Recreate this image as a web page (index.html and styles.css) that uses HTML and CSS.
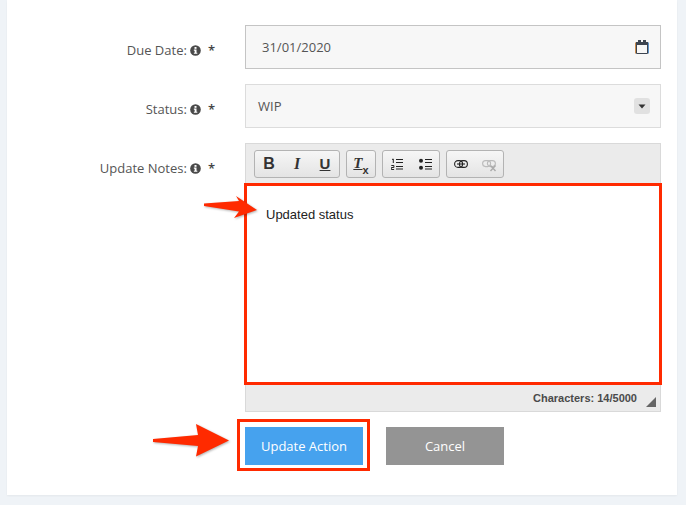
FILE: index.html
```html
<!DOCTYPE html>
<html lang="en">
<head>
<meta charset="utf-8">
<title>Update Action</title>
<link rel="stylesheet" href="styles.css">
</head>
<body>
<main class="card">
  <form class="form">
    <div class="row">
      <label class="label">Due Date:
        <svg class="info" viewBox="0 0 12 12"><use href="#i-info"/></svg><span class="req">*</span></label>
      <div class="field field-date">
        <span class="value">31/01/2020</span>
        <svg class="cal" viewBox="0 0 14 14" width="14" height="14">
          <path d="M0.5 2.5V13.5" stroke="#c98a4b" stroke-width="1"/>
          <path d="M13.5 2.5V13.5" stroke="#5f93c9" stroke-width="1"/>
          <path d="M1.5 3V13.5H12.5V3" fill="none" stroke="#3c4450" stroke-width="1"/>
          <rect x="1" y="2" width="12" height="3" fill="#3c4450"/>
          <rect x="3" y="0" width="3" height="3" fill="#3c4450"/>
          <rect x="8" y="0" width="3" height="3" fill="#3c4450"/>
        </svg>
      </div>
    </div>
    <div class="row">
      <label class="label">Status:
        <svg class="info" viewBox="0 0 12 12"><use href="#i-info"/></svg><span class="req">*</span></label>
      <div class="field field-status">
        <span class="value">WIP</span>
        <span class="caret"><svg viewBox="0 0 8 5" width="8" height="5"><path d="M0.5 0.5h7L4 4.6z" fill="#333"/></svg></span>
      </div>
    </div>
    <div class="row">
      <label class="label">Update Notes:
        <svg class="info" viewBox="0 0 12 12"><use href="#i-info"/></svg><span class="req">*</span></label>
      <div class="editor">
        <div class="toolbar">
          <div class="group g-basic">
            <span class="tool t-b">B</span><span class="tool t-i">I</span><span class="tool t-u">U</span>
          </div>
          <div class="group g-clear">
            <span class="t-t">T</span><span class="t-x">x</span>
          </div>
          <div class="group g-list">
            <svg viewBox="0 0 12 12" width="12" height="12">
              <path d="M1 1.5L2.3 1V5" fill="none" stroke="#222" stroke-width="1"/>
              <path d="M0.3 7.5h2.6v2H0.3v2h2.8" fill="none" stroke="#222" stroke-width="1"/>
              <path d="M5 1.5h7M5 4.5h7M5 8.5h7M5 11h7" stroke="#222" stroke-width="1"/>
            </svg>
            <svg viewBox="0 0 13 12" width="13" height="12">
              <circle cx="2" cy="2.8" r="2" fill="#222"/><circle cx="2" cy="9.8" r="2" fill="#222"/>
              <path d="M6 1.5h7M6 4.5h7M6 8.5h7M6 11h7" stroke="#222" stroke-width="1"/>
            </svg>
          </div>
          <div class="group g-link">
            <svg viewBox="0 0 14 8" width="14" height="8">
              <rect x="0.6" y="0.6" width="8" height="6.8" rx="3.4" fill="none" stroke="#222" stroke-width="1.1"/>
              <rect x="5.4" y="0.6" width="8" height="6.8" rx="3.4" fill="none" stroke="#222" stroke-width="1.1"/>
              <path d="M3 4h8" stroke="#222" stroke-width="1.1"/>
            </svg>
            <svg viewBox="0 0 15 12" width="15" height="12">
              <rect x="0.6" y="0.6" width="8" height="6" rx="3" fill="none" stroke="#bbb" stroke-width="1.1"/>
              <rect x="5.4" y="0.6" width="8" height="6" rx="3" fill="none" stroke="#bbb" stroke-width="1.1"/>
              <path d="M8.5 5.5l5 5.5M13.5 5.5l-5 5.5" stroke="#aaa" stroke-width="1.4"/>
            </svg>
          </div>
        </div>
        <div class="notes">Updated status</div>
        <div class="statusbar">
          <span class="count">Characters: 14/5000</span>
          <svg class="grip" viewBox="0 0 10 10" width="10" height="10"><path d="M10 0v10H0z" fill="#666"/></svg>
        </div>
      </div>
    </div>
    <div class="actions">
      <button type="button" class="btn btn-primary">Update Action</button>
      <button type="button" class="btn btn-cancel">Cancel</button>
    </div>
  </form>
</main>
<svg class="arrow arrow-notes" viewBox="0 0 53 22" width="53" height="22">
  <path d="M0 7.5L35 5L32 0L53 14L30 22L35 15.5L0 10Z" fill="#ff2a00"/>
</svg>
<svg class="arrow arrow-btn" viewBox="0 0 76 33" width="76" height="33">
  <path d="M0 15L45 11L43 0L76 16.5L43 32.5L45 22L0 18Z" fill="#ff2a00"/>
</svg>
<svg class="defs" width="0" height="0">
  <defs>
    <g id="i-info">
      <circle cx="6" cy="6" r="5.8" fill="#4a4a4a"/>
      <rect x="4.9" y="2.2" width="2.2" height="2" fill="#fff"/>
      <path d="M4.2 5h2.9v3.4h.9v1.2H4.2V8.4h.9V6.2h-.9z" fill="#fff"/>
    </g>
  </defs>
</svg>
</body>
</html>
```
FILE: styles.css
```css
* { box-sizing: border-box; }
html, body { margin: 0; padding: 0; }
body {
  position: relative;
  width: 686px;
  height: 505px;
  overflow: hidden;
  background: #eff3f7;
  font-family: "Open Sans", sans-serif;
  font-size: 13px;
  color: #555;
}
.card {
  margin: 0 9px 0 7px;
  height: 495px;
  background: #fff;
  box-shadow: 0 1px 2px rgba(0,0,0,0.05);
  padding: 25px 0 0 238px;
}
.form { display: flex; flex-direction: column; gap: 15px; width: 416px; }
.row { position: relative; display: flex; }
.label {
  position: absolute;
  right: 100%;
  top: 15px;
  width: 200px;
  margin-right: 30px;
  display: flex;
  justify-content: flex-end;
  align-items: center;
  gap: 3px;
  line-height: 20px;
  white-space: nowrap;
}
.info { width: 11px; height: 11px; flex: none; }
.req { margin-left: 4px; font-size: 13px; font-weight: 600; color: #444; }
.field {
  flex: 1;
  height: 44px;
  background: #f7f7f7;
  display: flex;
  align-items: center;
  justify-content: space-between;
}
.field-date { border: 1px solid #c4c4c4; padding: 0 11px 0 16px; }
.field-status { border: 1px solid #dcdcdc; padding: 0 10px 0 12px; }
.value { color: #555; line-height: 18px; }
.cal { display: block; }
.caret {
  width: 16px;
  height: 16px;
  background: #e1e1e1;
  border-radius: 3px;
  display: flex;
  align-items: center;
  justify-content: center;
}
.editor { flex: 1; display: flex; flex-direction: column; }
.toolbar {
  height: 40px;
  background: #ebebeb;
  border: 1px solid #d9d9d9;
  border-bottom: 0;
  display: flex;
  gap: 6px;
  padding: 6px 0 0 8px;
}
.group {
  height: 28px;
  border: 1px solid #b3b3b3;
  border-radius: 3px;
  background: linear-gradient(#f6f6f6, #e4e4e4);
  display: flex;
  align-items: center;
  color: #333;
  font-family: "Liberation Sans", sans-serif;
}
.g-basic { width: 86px; }
.tool { width: 28px; text-align: center; font-size: 16px; font-weight: 700; line-height: 26px; color: #333; }
.t-i { font-style: italic; font-family: "Liberation Serif", serif; }
.t-u { text-decoration: underline; font-size: 15px; }
.g-clear {
  width: 30px;
  justify-content: center;
  align-items: flex-start;
  padding-top: 3px;
}
.t-t { font-size: 15px; font-weight: 700; font-style: italic; text-decoration: underline; line-height: 19px; font-family: "Liberation Serif", serif; }
.t-x { font-size: 11px; font-weight: 700; line-height: 11px; margin-top: 11px; }
.g-list { width: 58px; gap: 16px; padding-left: 8px; }
.g-link { width: 58px; gap: 14px; padding-left: 7px; }
.g-link svg:last-child { margin-top: 3px; }
.notes {
  height: 202px;
  margin: 0 -1px;
  border: 3px solid #ff2a00;
  background: #fff;
  padding: 20px 19px;
  font-family: "Liberation Sans", sans-serif;
  font-size: 13px;
  line-height: 18px;
  color: #222;
}
.statusbar {
  height: 27px;
  background: #ebebeb;
  border: 1px solid #d9d9d9;
  border-top: 0;
  display: flex;
  align-items: flex-start;
  justify-content: flex-end;
  padding: 7px 4px 0 0;
  gap: 9px;
}
.count { font-family: "Liberation Sans", sans-serif; font-size: 11px; font-weight: 700; line-height: 12px; color: #4a4a4a; }
.grip { margin-top: 5px; }
.actions { display: flex; gap: 23px; }
.btn {
  position: relative;
  width: 118px;
  height: 38px;
  border: 0;
  padding: 0;
  font-family: "Open Sans", sans-serif;
  font-size: 13px;
  color: #fff;
}
.btn-primary { background: #46a2ee; }
.btn-primary::after {
  content: "";
  position: absolute;
  inset: -8px -7px -6px -8px;
  border: 3px solid #ff2a00;
}
.btn-cancel { background: #949494; }
.arrow { position: absolute; filter: drop-shadow(1px 1px 1px rgba(0,0,0,0.3)); }
.arrow-notes { left: 204px; top: 196px; }
.arrow-btn { left: 153px; top: 424px; }
.defs { position: absolute; }
```
